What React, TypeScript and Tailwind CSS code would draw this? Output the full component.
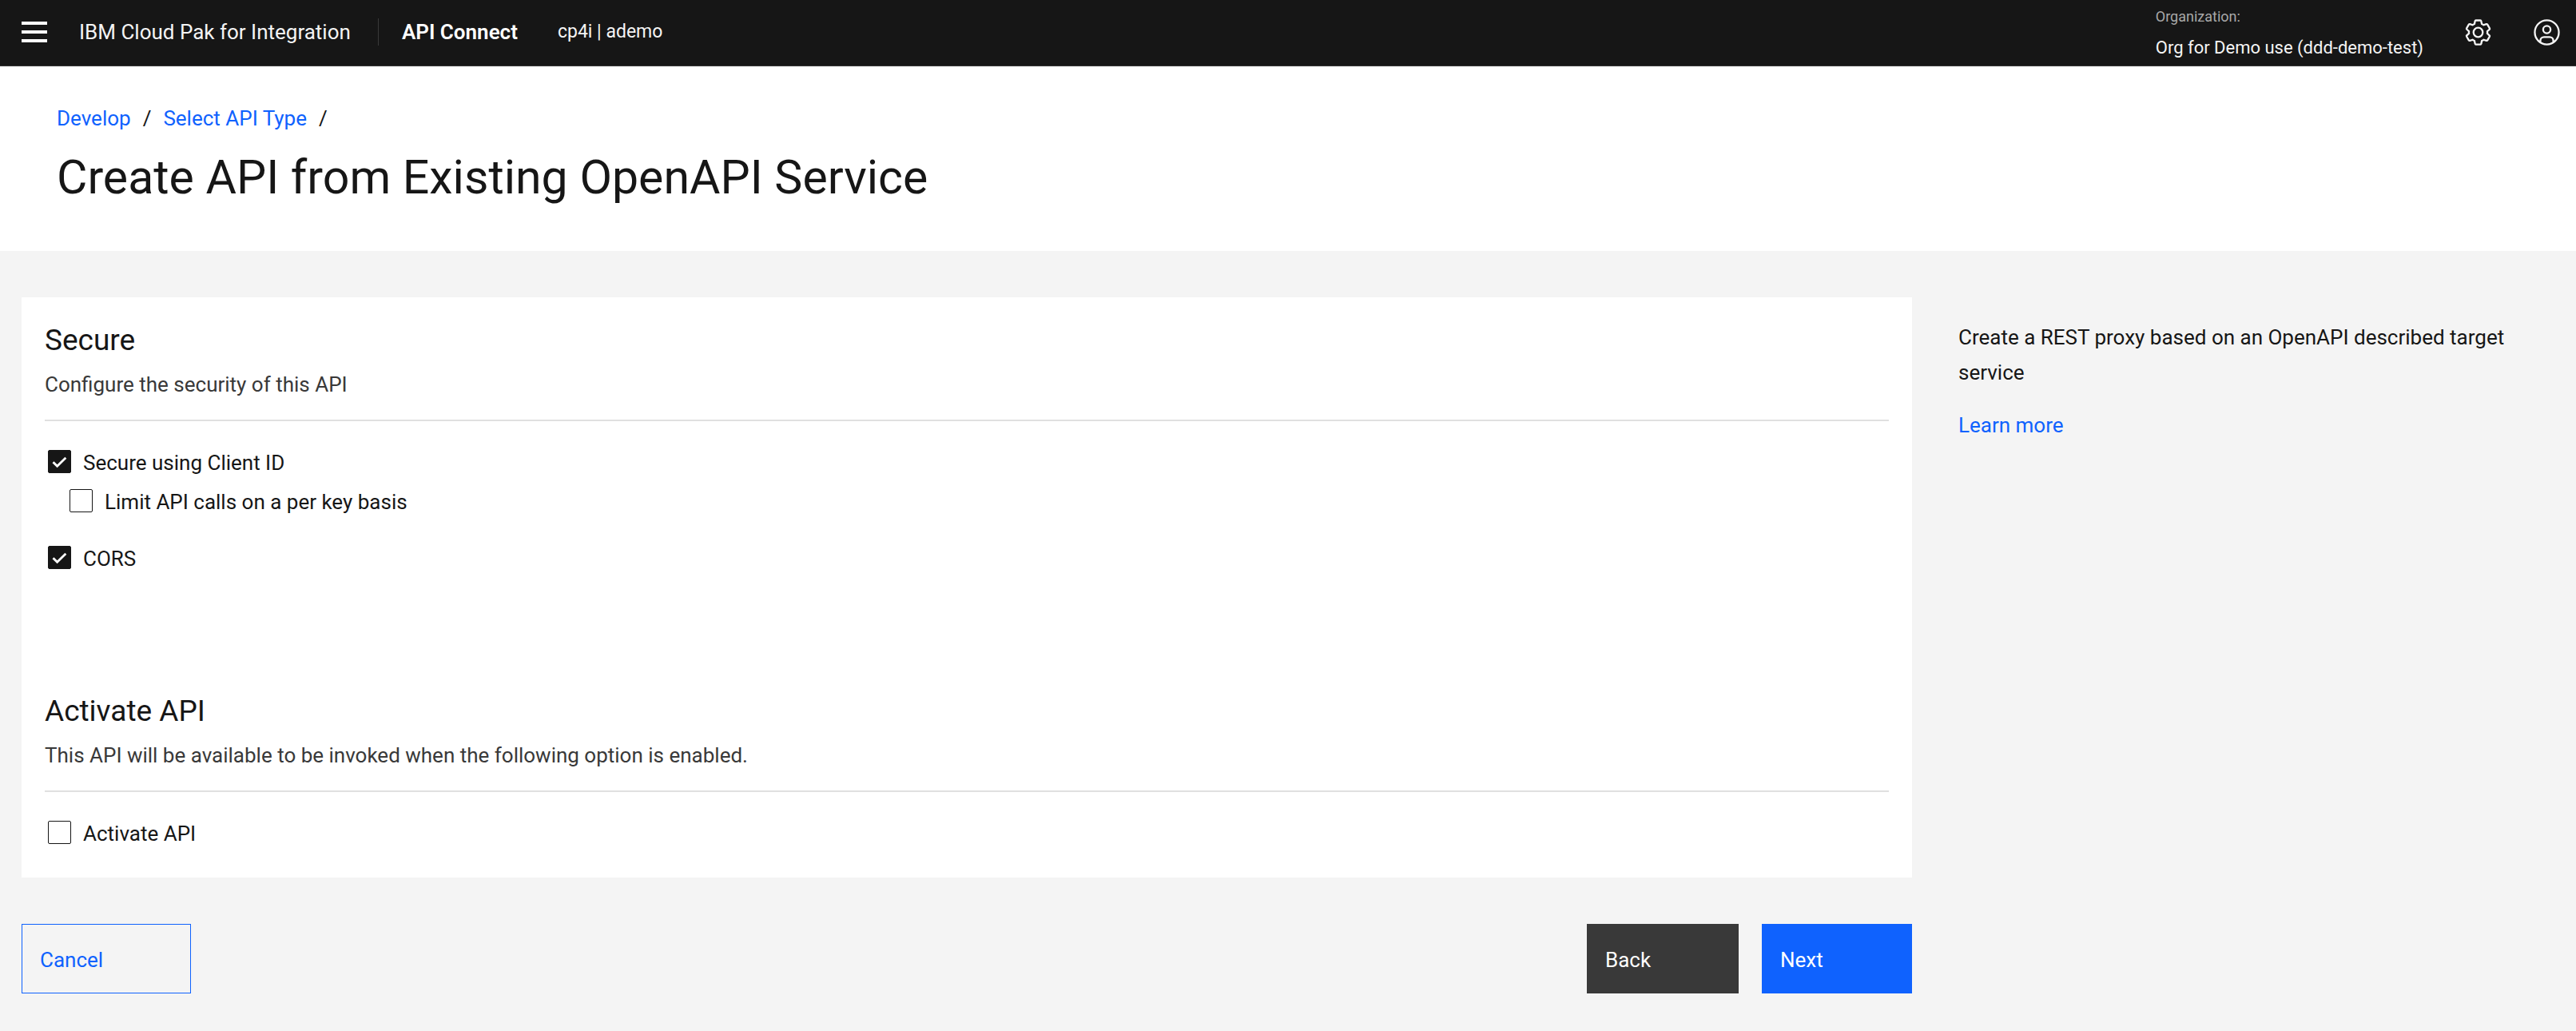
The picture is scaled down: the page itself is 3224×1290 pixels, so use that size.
import { useState, type ReactNode } from "react";

function SettingsIcon() {
  return (
    <svg viewBox="0 0 32 32" className="size-[37px] fill-current" aria-hidden="true">
      <path d="M27,16.76c0-.25,0-.5,0-.76s0-.51,0-.77l1.92-1.68A2,2,0,0,0,29.3,11L26.94,7a2,2,0,0,0-1.73-1,2,2,0,0,0-.64.1l-2.43.82a11.35,11.35,0,0,0-1.31-.75l-.51-2.52a2,2,0,0,0-2-1.61H13.64a2,2,0,0,0-2,1.61l-.51,2.52a11.48,11.48,0,0,0-1.32.75L7.43,6.06A2,2,0,0,0,6.79,6,2,2,0,0,0,5.06,7L2.7,11a2,2,0,0,0,.41,2.51L5,15.24c0,.25,0,.5,0,.76s0,.51,0,.77L3.11,18.45A2,2,0,0,0,2.7,21L5.06,25a2,2,0,0,0,1.73,1,2,2,0,0,0,.64-.1l2.43-.82a11.35,11.35,0,0,0,1.31.75l.51,2.52a2,2,0,0,0,2,1.61h4.72a2,2,0,0,0,2-1.61l.51-2.52a11.48,11.48,0,0,0,1.32-.75l2.42.82a2,2,0,0,0,.64.1,2,2,0,0,0,1.73-1L29.3,21a2,2,0,0,0-.41-2.51ZM25.21,24l-3.43-1.16a8.86,8.86,0,0,1-2.71,1.57L18.36,28H13.64l-.71-3.55a9.36,9.36,0,0,1-2.7-1.57L6.79,24,4.43,20l2.72-2.4a8.9,8.9,0,0,1,0-3.13L4.43,12,6.79,8l3.43,1.16a8.86,8.86,0,0,1,2.71-1.57L13.64,4h4.72l.71,3.55a9.36,9.36,0,0,1,2.7,1.57L25.21,8,27.57,12l-2.72,2.4a8.9,8.9,0,0,1,0,3.13L27.57,20Z" />
      <path d="M16,22a6,6,0,1,1,6-6A5.94,5.94,0,0,1,16,22Zm0-10a3.91,3.91,0,0,0-4,4,3.91,3.91,0,0,0,4,4,3.91,3.91,0,0,0,4-4A3.91,3.91,0,0,0,16,12Z" />
    </svg>
  );
}

function UserIcon() {
  return (
    <svg viewBox="0 0 32 32" className="size-[37px] fill-current" aria-hidden="true">
      <path d="M16,8a5,5,0,1,0,5,5A5,5,0,0,0,16,8Zm0,8a3,3,0,1,1,3-3A3,3,0,0,1,16,16Z" />
      <path d="M16,2A14,14,0,1,0,30,16,14.0158,14.0158,0,0,0,16,2ZM10,26.3765V25a3.0033,3.0033,0,0,1,3-3h6a3.0033,3.0033,0,0,1,3,3v1.3765a11.8989,11.8989,0,0,1-12,0Zm13.9925-1.4507A5.0016,5.0016,0,0,0,19,20H13a5.0016,5.0016,0,0,0-4.9925,4.9258,12,12,0,1,1,15.985,0Z" />
    </svg>
  );
}

function Header() {
  return (
    <header className="flex h-[83px] items-center border-b border-[#393939] bg-[#161616] pb-[2px] text-[#f4f4f4]">
      <button type="button" aria-label="Menu" className="ml-[27px] flex flex-col gap-[7px]">
        <span className="h-1 w-8 bg-white" />
        <span className="h-1 w-8 bg-white" />
        <span className="h-1 w-8 bg-white" />
      </button>
      <a href="#home" className="ml-10 text-[26px]">IBM Cloud Pak for Integration</a>
      <span className="ml-[34px] h-[34px] w-px bg-[#393939]" />
      <a href="#connect" className="ml-[29px] text-[26px] font-semibold text-white">API Connect</a>
      <span className="ml-[50px] text-[23px]">cp4i | ademo</span>
      <div className="mr-[50px] ml-auto flex flex-col">
        <span className="text-[18px] leading-[39px] text-[#a8a8a8]">Organization:</span>
        <span className="text-[22px] leading-[40px]">Org for Demo use (ddd-demo-test)</span>
      </div>
      <button type="button" aria-label="Settings"><SettingsIcon /></button>
      <button type="button" aria-label="Account" className="mr-[18px] ml-[49px]"><UserIcon /></button>
    </header>
  );
}

function Checkbox({ label, initial = false, nested = false }: { label: string; initial?: boolean; nested?: boolean }) {
  const [checked, setChecked] = useState(initial);
  return (
    <label className={`flex h-[49px] items-center gap-[15px] text-[26px] ${nested ? "pl-[31px]" : "pl-1"}`}>
      <span className="relative flex">
        <input
          type="checkbox"
          checked={checked}
          onChange={(e) => setChecked(e.target.checked)}
          className="size-[29px] appearance-none rounded-[2px] border border-[#161616] checked:bg-[#161616]"
        />
        {checked && (
          <svg viewBox="0 0 29 29" className="pointer-events-none absolute inset-0 size-[29px] fill-none stroke-white" aria-hidden="true">
            <path d="M6.5 15.2 L11.6 20.3 L22.3 9.8" strokeWidth="2.8" />
          </svg>
        )}
      </span>
      <span className="pt-[3px]">{label}</span>
    </label>
  );
}

function Section({ title, description, children }: { title: string; description: string; children: ReactNode }) {
  return (
    <section>
      <h2 className="text-[37px] leading-[52px]">{title}</h2>
      <p className="mt-[10px] text-[26px] leading-[38px] text-[#393939]">{description}</p>
      <hr className="mt-[25px] mb-[26px] border-t-2 border-[#e0e0e0]" />
      {children}
    </section>
  );
}

export default function App() {
  return (
    <div className="min-h-screen bg-[#f4f4f4] font-['Roboto',sans-serif] text-[#161616]">
      <Header />
      <div className="bg-white px-[71px] pt-[46px] pb-[52px]">
        <nav aria-label="Breadcrumb" className="flex gap-[15px] text-[26px] leading-[38px]">
          <a href="#develop" className="text-[#0f62fe]">Develop</a>
          <span>/</span>
          <a href="#type" className="text-[#0f62fe]">Select API Type</a>
          <span>/</span>
        </nav>
        <h1 className="mt-[15px] text-[59px] leading-[80px]">Create API from Existing OpenAPI Service</h1>
      </div>
      <div className="grid grid-cols-4 pt-[58px] pb-[46px]">
        <main className="col-span-3 pr-[25px] pl-[27px]">
          <div className="bg-white px-[29px] pt-7 pb-8">
            <Section title="Secure" description="Configure the security of this API">
              <Checkbox label="Secure using Client ID" initial />
              <Checkbox label="Limit API calls on a per key basis" nested />
              <div className="mt-[22px] mb-[142px]">
                <Checkbox label="CORS" initial />
              </div>
            </Section>
            <Section title="Activate API" description="This API will be available to be invoked when the following option is enabled.">
              <Checkbox label="Activate API" />
            </Section>
          </div>
          <div className="mt-[58px] flex h-[87px] gap-[29px] text-[26px]">
            <button type="button" className="mr-auto w-[212px] border border-[#0f62fe] pt-[3px] pl-[22px] text-left text-[#0f62fe]">Cancel</button>
            <button type="button" className="w-[190px] bg-[#393939] pt-[3px] pl-[23px] text-left text-white">Back</button>
            <button type="button" className="w-[188px] bg-[#0f62fe] pt-[3px] pl-[23px] text-left text-white">Next</button>
          </div>
        </main>
        <aside className="px-[33px] pt-7 text-[26px] leading-[44px]">
          <p>Create a REST proxy based on an OpenAPI described target service</p>
          <a href="#learn" className="mt-[22px] block text-[#0f62fe]">Learn more</a>
        </aside>
      </div>
    </div>
  );
}
